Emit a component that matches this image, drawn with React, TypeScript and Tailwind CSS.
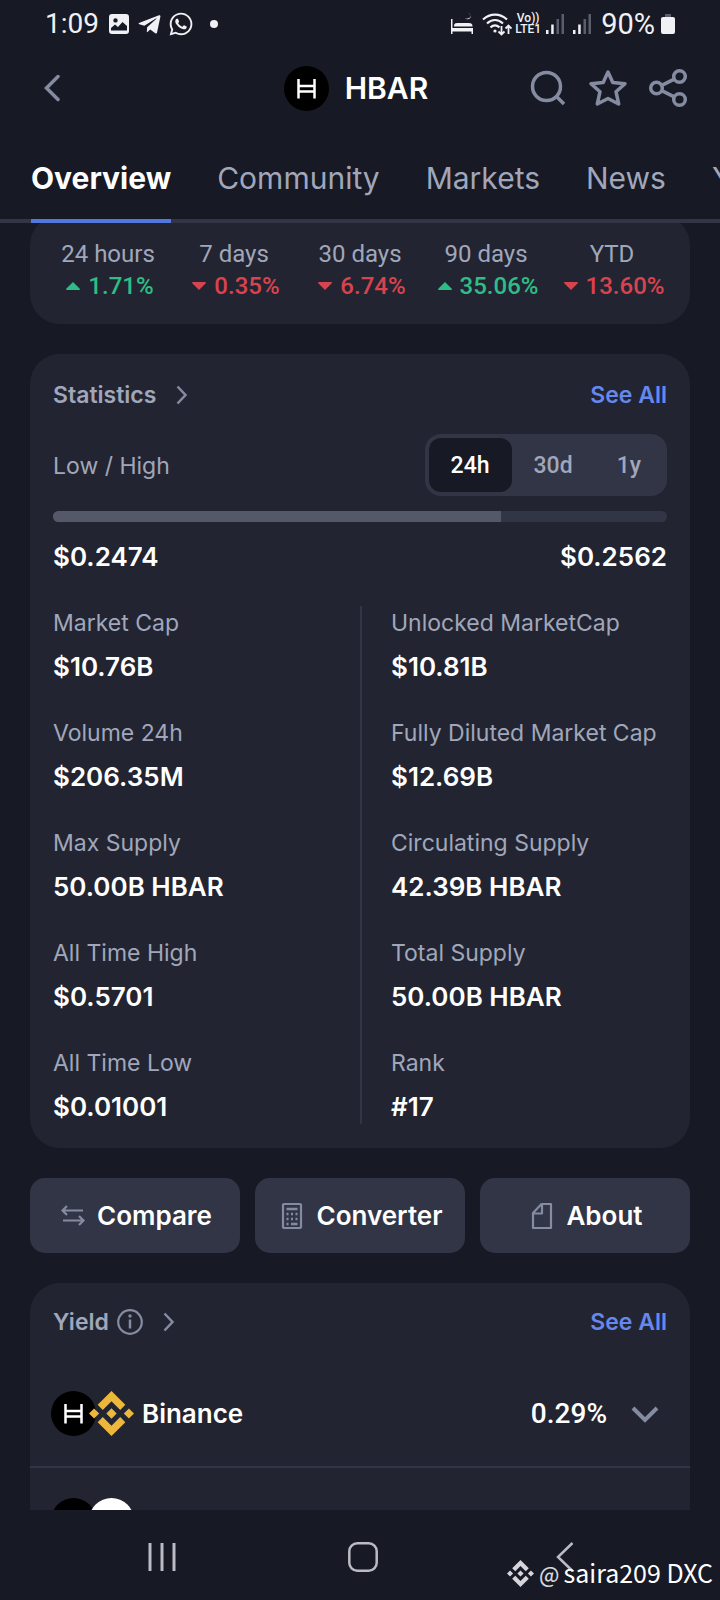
import type { ReactNode } from "react";
import { FaTelegramPlane, FaWhatsapp } from "react-icons/fa";

const tabs = ["Overview", "Community", "Markets", "News", "Yield"];

const performance = [
  { period: "24 hours", change: "1.71%", up: true },
  { period: "7 days", change: "0.35%", up: false },
  { period: "30 days", change: "6.74%", up: false },
  { period: "90 days", change: "35.06%", up: true },
  { period: "YTD", change: "13.60%", up: false },
];

const leftStats = [
  { label: "Market Cap", value: "$10.76B" },
  { label: "Volume 24h", value: "$206.35M" },
  { label: "Max Supply", value: "50.00B HBAR" },
  { label: "All Time High", value: "$0.5701" },
  { label: "All Time Low", value: "$0.01001" },
];

const rightStats = [
  { label: "Unlocked MarketCap", value: "$10.81B" },
  { label: "Fully Diluted Market Cap", value: "$12.69B" },
  { label: "Circulating Supply", value: "42.39B HBAR" },
  { label: "Total Supply", value: "50.00B HBAR" },
  { label: "Rank", value: "#17" },
];

const HederaLogo = () => (
  <svg viewBox="0 0 45 45" className="size-[45px] shrink-0" aria-hidden="true">
    <circle cx="22.5" cy="22.5" r="22.5" fill="#000" />
    <path
      d="M14.5 13v19.500M30.500 13v19.500M14.500 20h16M14.500 25.500h16"
      stroke="#fff"
      strokeWidth="2.500"
      fill="none"
    />
  </svg>
);

const BinanceLogo = ({ className }: { className: string }) => (
  <svg
    viewBox="0 0 126.61 126.61"
    className={className}
    fill="currentColor"
    aria-hidden="true"
  >
    <path d="M38.73 53.2l24.59-24.58 24.6 24.6 14.3-14.31L63.32 0 24.42 38.9zM0 63.31l14.3-14.31 14.31 14.31-14.31 14.3zM38.73 73.41l24.59 24.59 24.6-24.6 14.31 14.29-38.91 38.91-38.91-38.88zM98 63.31l14.3-14.31 14.31 14.3-14.31 14.32zM77.83 63.3L63.32 48.78 48.81 63.28l14.51 14.5z" />
  </svg>
);

const ChevronRight = () => (
  <svg
    viewBox="0 0 12 20"
    className="h-5 w-3"
    fill="none"
    stroke="#858ca2"
    strokeWidth="2.5"
    aria-hidden="true"
  >
    <path d="M1.500 1.500l8 8.500-8 8.500" />
  </svg>
);

const SignalBars = () => (
  <svg viewBox="0 0 18 20" className="h-5 w-[18px]" aria-hidden="true">
    <path d="M0 16h2.500v4H0zM5.200 10.500h2.500V20H5.200z" fill="#f0f1f4" />
    <path d="M10.500 5H13v15h-2.500zM15.500 0H18v20h-2.500z" fill="#5a5e6c" />
  </svg>
);

const StatusBar = () => (
  <div className="flex h-12 items-center justify-between px-[45px] font-[Roboto,sans-serif] text-[28px] leading-8 text-[#f0f1f4]">
    <div className="flex items-center">
      <span>1:09</span>
      <svg viewBox="0 0 20 20" className="ml-[10px] size-5" aria-hidden="true">
        <path
          fillRule="evenodd"
          fill="currentColor"
          d="M3 0h14a3 3 0 013 3v14a3 3 0 01-3 3H3a3 3 0 01-3-3V3a3 3 0 013-3zM2 16.500h16v-4.500l-4.500-4L9 13l-3-2.500-4 3.500zM6.500 4.200a2.200 2.200 0 100 4.400 2.200 2.200 0 000-4.400z"
        />
      </svg>
      <FaTelegramPlane className="ml-2 size-[25px]" />
      <FaWhatsapp className="ml-[6px] size-[26px]" />
      <span className="ml-4 size-2 rounded-full bg-[#f0f1f4]" />
    </div>
    <div className="flex items-center">
      <svg viewBox="0 0 22 22" className="size-[22px]" aria-hidden="true">
        <g fill="currentColor">
          <path d="M0 6h1.500v9H22v6h-1.500v-2.500h-19V21H0z" />
          <path d="M3 13.500c0-3 1-3.500 4-3.500h10c3 0 4.500.5 4.500 3.500z" />
          <path d="M17.500 0c3 1.500 3.500 6.500-3.500 5.500 3.500 2.500 9-1.500 3.500-5.500z" />
        </g>
      </svg>
      <svg
        viewBox="0 0 30 23"
        className="ml-[9px] h-[23px] w-[30px]"
        fill="none"
        stroke="currentColor"
        aria-hidden="true"
      >
        <path d="M1 6.500c7-6.500 17-6.500 24 0" strokeWidth="2.200" />
        <path d="M5 10.500c5-4.500 11-4.500 16 0" strokeWidth="2.200" />
        <path d="M8.500 14.300c3-2.500 6-2.500 9 0" strokeWidth="2.200" />
        <circle cx="13" cy="18" r="1.600" fill="currentColor" stroke="none" />
        <path
          d="M19.500 13v8M16.500 18.500l3 3 3-3M26.500 21v-8M23.500 15.500l3-3 3 3"
          strokeWidth="1.800"
        />
      </svg>
      <div className="ml-[3px] flex flex-col items-center text-[12px] font-medium leading-[11px]">
        <span>Vo))</span>
        <span>LTE1</span>
      </div>
      <div className="ml-[5px] flex gap-[9px]">
        <SignalBars />
        <SignalBars />
      </div>
      <span className="ml-[10px] text-[29px]">90%</span>
      <svg viewBox="0 0 14 20" className="ml-[6px] h-5 w-[14px]" aria-hidden="true">
        <path d="M4 0h6v3H4z" fill="#5a5e6c" />
        <rect y="3" width="14" height="17" rx="2" fill="currentColor" />
      </svg>
    </div>
  </div>
);

const Header = () => (
  <header className="grid h-20 grid-cols-[1fr_auto_1fr] items-center pl-6 pr-8 text-[#858ca2]">
    <button type="button" aria-label="Back" className="ml-2 flex size-10 items-center justify-center">
      <svg viewBox="0 0 16 28" className="h-7 w-4" fill="none" stroke="currentColor" strokeWidth="3.500" strokeLinecap="round">
        <path d="M14 2.500L2.500 14 14 25.500" />
      </svg>
    </button>
    <div className="flex items-center gap-4">
      <HederaLogo />
      <h1 className="text-[30px] font-semibold leading-9 text-white">HBAR</h1>
    </div>
    <div className="flex justify-end gap-5">
      <button type="button" aria-label="Search">
        <svg viewBox="0 0 40 40" className="size-10" fill="none" stroke="currentColor" strokeWidth="3.500">
          <circle cx="18.500" cy="18.500" r="14" />
          <path d="M28.500 28.500l7.500 7.500" />
        </svg>
      </button>
      <button type="button" aria-label="Add to watchlist">
        <svg viewBox="0 0 40 40" className="size-10" fill="none" stroke="currentColor" strokeWidth="3.500" strokeLinejoin="round">
          <path d="M20 4l4.800 10.500 12.200 1.200-9 8 2.700 12.300L20 30.500 9.300 36 12 23.700l-9-8 12.200-1.200z" />
        </svg>
      </button>
      <button type="button" aria-label="Share">
        <svg viewBox="0 0 40 40" className="size-10" fill="none" stroke="currentColor" strokeWidth="3.500">
          <circle cx="8.500" cy="20" r="5.800" />
          <circle cx="31.500" cy="8.500" r="5.800" />
          <circle cx="31.500" cy="31.500" r="5.800" />
          <path d="M13.700 17.400l12.600-6.300M13.700 22.600l12.600 6.300" />
        </svg>
      </button>
    </div>
  </header>
);

const Tabs = () => (
  <nav className="flex shrink-0 gap-[46px] overflow-hidden pl-[31px] pt-8 text-[30px] leading-9 text-[#a1a7bb] shadow-[inset_0_-4px_0_#323546]">
    {tabs.map((tab, index) => (
      <a
        key={tab}
        href="#"
        className={
          index === 0
            ? "shrink-0 pb-[27px] font-bold text-white shadow-[inset_0_-4px_0_#5278e0]"
            : "shrink-0 pb-[27px]"
        }
      >
        {tab}
      </a>
    ))}
  </nav>
);

const Performance = () => (
  <section className="-mt-2 grid grid-cols-5 rounded-[30px] bg-[#222531] px-[15px] pb-[22px] pt-[23px]">
    {performance.map(({ period, change, up }) => (
      <div key={period} className="flex flex-col items-center font-[Roboto,sans-serif] text-[24px] leading-8">
        <span className="text-[#a1a7bb]">{period}</span>
        <span
          className={
            up
              ? "flex items-center gap-2 pl-1 font-medium text-[#2ebd85]"
              : "flex items-center gap-2 pl-1 font-medium text-[#d8434e]"
          }
        >
          <svg viewBox="0 0 14 8" className="h-2 w-[14px]" fill="currentColor" aria-hidden="true">
            <path d={up ? "M7 0l7 7q0 1-1 1H1Q0 8 0 7z" : "M7 8L0 1q0-1 1-1h12q1 0 1 1z"} />
          </svg>
          {change}
        </span>
      </div>
    ))}
  </section>
);

const StatColumn = ({ stats }: { stats: { label: string; value: string }[] }) => (
  <dl className="flex flex-col gap-[34px]">
    {stats.map(({ label, value }) => (
      <div key={label} className="flex flex-col gap-3">
        <dt className="whitespace-nowrap text-[23px] leading-[30px] text-[#a1a7bb]">{label}</dt>
        <dd className="text-[26px] font-semibold leading-[34px] text-white">{value}</dd>
      </div>
    ))}
  </dl>
);

const CardHeader = ({ title, children }: { title: string; children?: ReactNode }) => (
  <div className="flex items-center justify-between leading-[34px]">
    <h2 className="flex items-center text-[23px] font-semibold text-[#a1a7bb]">
      {title}
      {children}
      <span className="ml-5">
        <ChevronRight />
      </span>
    </h2>
    <a href="#" className="text-[23px] font-semibold text-[#6688ee]">
      See All
    </a>
  </div>
);

const Statistics = () => (
  <section className="rounded-[30px] bg-[#222531] px-[23px] py-6">
    <CardHeader title="Statistics" />
    <div className="mt-[22px] flex items-center justify-between">
      <span className="pt-[2px] text-[23px] leading-[30px] text-[#a1a7bb]">Low / High</span>
      <div className="flex h-[62px] rounded-2xl bg-[#323546] p-1 font-[Roboto,sans-serif] text-[23px] font-medium text-[#a1a7bb]">
        <button type="button" className="rounded-xl bg-[#171924] px-[22px] pt-[3px] text-white">
          24h
        </button>
        <button type="button" className="px-[22px] pt-[3px]">
          30d
        </button>
        <button type="button" className="px-[22px] pt-[3px]">
          1y
        </button>
      </div>
    </div>
    <div className="mt-[15px] h-[11px] overflow-hidden rounded-full bg-[#323546]">
      <div className="h-full w-[73%] bg-[#555868]" />
    </div>
    <div className="mt-[18px] flex justify-between text-[26px] font-semibold leading-[34px] text-white">
      <span>$0.2474</span>
      <span>$0.2562</span>
    </div>
    <div className="mt-8 grid grid-cols-2">
      <div className="pt-[2px]">
        <StatColumn stats={leftStats} />
      </div>
      <div className="border-l-2 border-[#323546] pl-[29px] pt-[2px]">
        <StatColumn stats={rightStats} />
      </div>
    </div>
  </section>
);

const ActionButton = ({ label, children }: { label: string; children: ReactNode }) => (
  <button
    type="button"
    className="flex h-[75px] items-center justify-center gap-3 rounded-[15px] bg-[#323546] pl-[3px] text-[26px] font-semibold text-white"
  >
    <svg viewBox="0 0 24 28" className="h-7 w-6 text-[#858ca2]" fill="none" stroke="currentColor" aria-hidden="true">
      {children}
    </svg>
    {label}
  </button>
);

const Actions = () => (
  <div className="grid grid-cols-3 gap-[15px]">
    <ActionButton label="Compare">
      <path d="M22 8.500H2M6 4L1.500 8.500 6 13M2 18.500h20M18 14l4.500 4.500L18 23" strokeWidth="2.200" />
    </ActionButton>
    <ActionButton label="Converter">
      <rect x="3" y="2" width="18" height="24" rx="1" strokeWidth="2.200" />
      <path d="M6.500 7h11M6.500 12h2M11 12h2M15.500 12h2M6.500 17h2M11 17h2M15.500 17h2M6.500 22h2M11 22h6.500" strokeWidth="2.500" />
    </ActionButton>
    <ActionButton label="About">
      <path d="M11.500 2H21v24H3V11zM12 2v9.500H3" strokeWidth="2.200" strokeLinejoin="round" />
    </ActionButton>
  </div>
);

const Yield = () => (
  <section className="rounded-t-[30px] bg-[#222531] pt-[22px]">
    <div className="px-[23px]">
      <CardHeader title="Yield">
        <svg viewBox="0 0 26 26" className="ml-2 size-[26px]" fill="none" stroke="#858ca2" strokeWidth="2.2" aria-hidden="true">
          <circle cx="13" cy="13" r="11.800" />
          <path d="M13 10.500v9" strokeWidth="2.500" />
          <circle cx="13" cy="7" r="1.700" fill="#858ca2" stroke="none" />
        </svg>
      </CardHeader>
    </div>
    <button
      type="button"
      className="mt-[22px] flex h-[107px] w-full items-center border-b-2 border-[#323546] pl-[21px] pr-[31px] text-[26px] font-semibold text-white"
    >
      <HederaLogo />
      <BinanceLogo className="-ml-[7px] size-[45px] text-[#edb73b]" />
      <span className="ml-2">Binance</span>
      <span className="ml-auto font-[Roboto,sans-serif] text-[28px] font-medium">0.29%</span>
      <svg viewBox="0 0 28 18" className="ml-6 h-[18px] w-7" fill="none" stroke="#858ca2" strokeWidth="4" aria-hidden="true">
        <path d="M2 3l12 12L26 3" />
      </svg>
    </button>
    <div className="flex pl-[21px] pt-[30px]">
      <HederaLogo />
      <span className="-ml-[7px] size-[45px] rounded-full bg-white" />
    </div>
  </section>
);

const Watermark = () => (
  <div className="absolute bottom-[10px] right-[7px] flex items-center leading-8 text-white">
    <BinanceLogo className="mr-[5px] size-[27px] text-[#d6d5da]" />
    <span className="font-['Noto_Sans_CJK_SC',sans-serif] text-[25px]">
      <span className="mr-1 text-[21px] font-medium text-[#d6d5da]">@</span>saira209 DXC
    </span>
  </div>
);

const SystemNav = () => (
  <footer className="relative grid h-[90px] shrink-0 grid-cols-[1fr_auto_1fr] items-center bg-[#171924] pl-[5px] pt-[3px] text-[#babbc4]">
    <button type="button" aria-label="Recent apps" className="ml-auto mr-[172px]">
      <svg viewBox="0 0 28 30" className="h-[30px] w-7" fill="none" stroke="currentColor" strokeWidth="3">
        <path d="M2 1v28M14 1v28M26 1v28" />
      </svg>
    </button>
    <button type="button" aria-label="Home">
      <svg viewBox="0 0 30 30" className="size-[30px]" fill="none" stroke="currentColor" strokeWidth="2.500">
        <rect x="1.300" y="1.300" width="27.400" height="27.400" rx="8" />
      </svg>
    </button>
    <button type="button" aria-label="Back" className="ml-[178px] mr-auto">
      <svg viewBox="0 0 18 30" className="h-[30px] w-[18px]" fill="none" stroke="currentColor" strokeWidth="2.500">
        <path d="M16.500 1L2 15l14.500 14" />
      </svg>
    </button>
    <Watermark />
  </footer>
);

const App = () => {
  return (
    <div className="flex h-screen flex-col bg-[#171924] font-[Inter,sans-serif]">
      <StatusBar />
      <Header />
      <Tabs />
      <main className="flex min-h-0 flex-1 flex-col gap-[30px] overflow-hidden px-[30px]">
        <Performance />
        <Statistics />
        <Actions />
        <Yield />
      </main>
      <SystemNav />
    </div>
  );
};

export default App;
